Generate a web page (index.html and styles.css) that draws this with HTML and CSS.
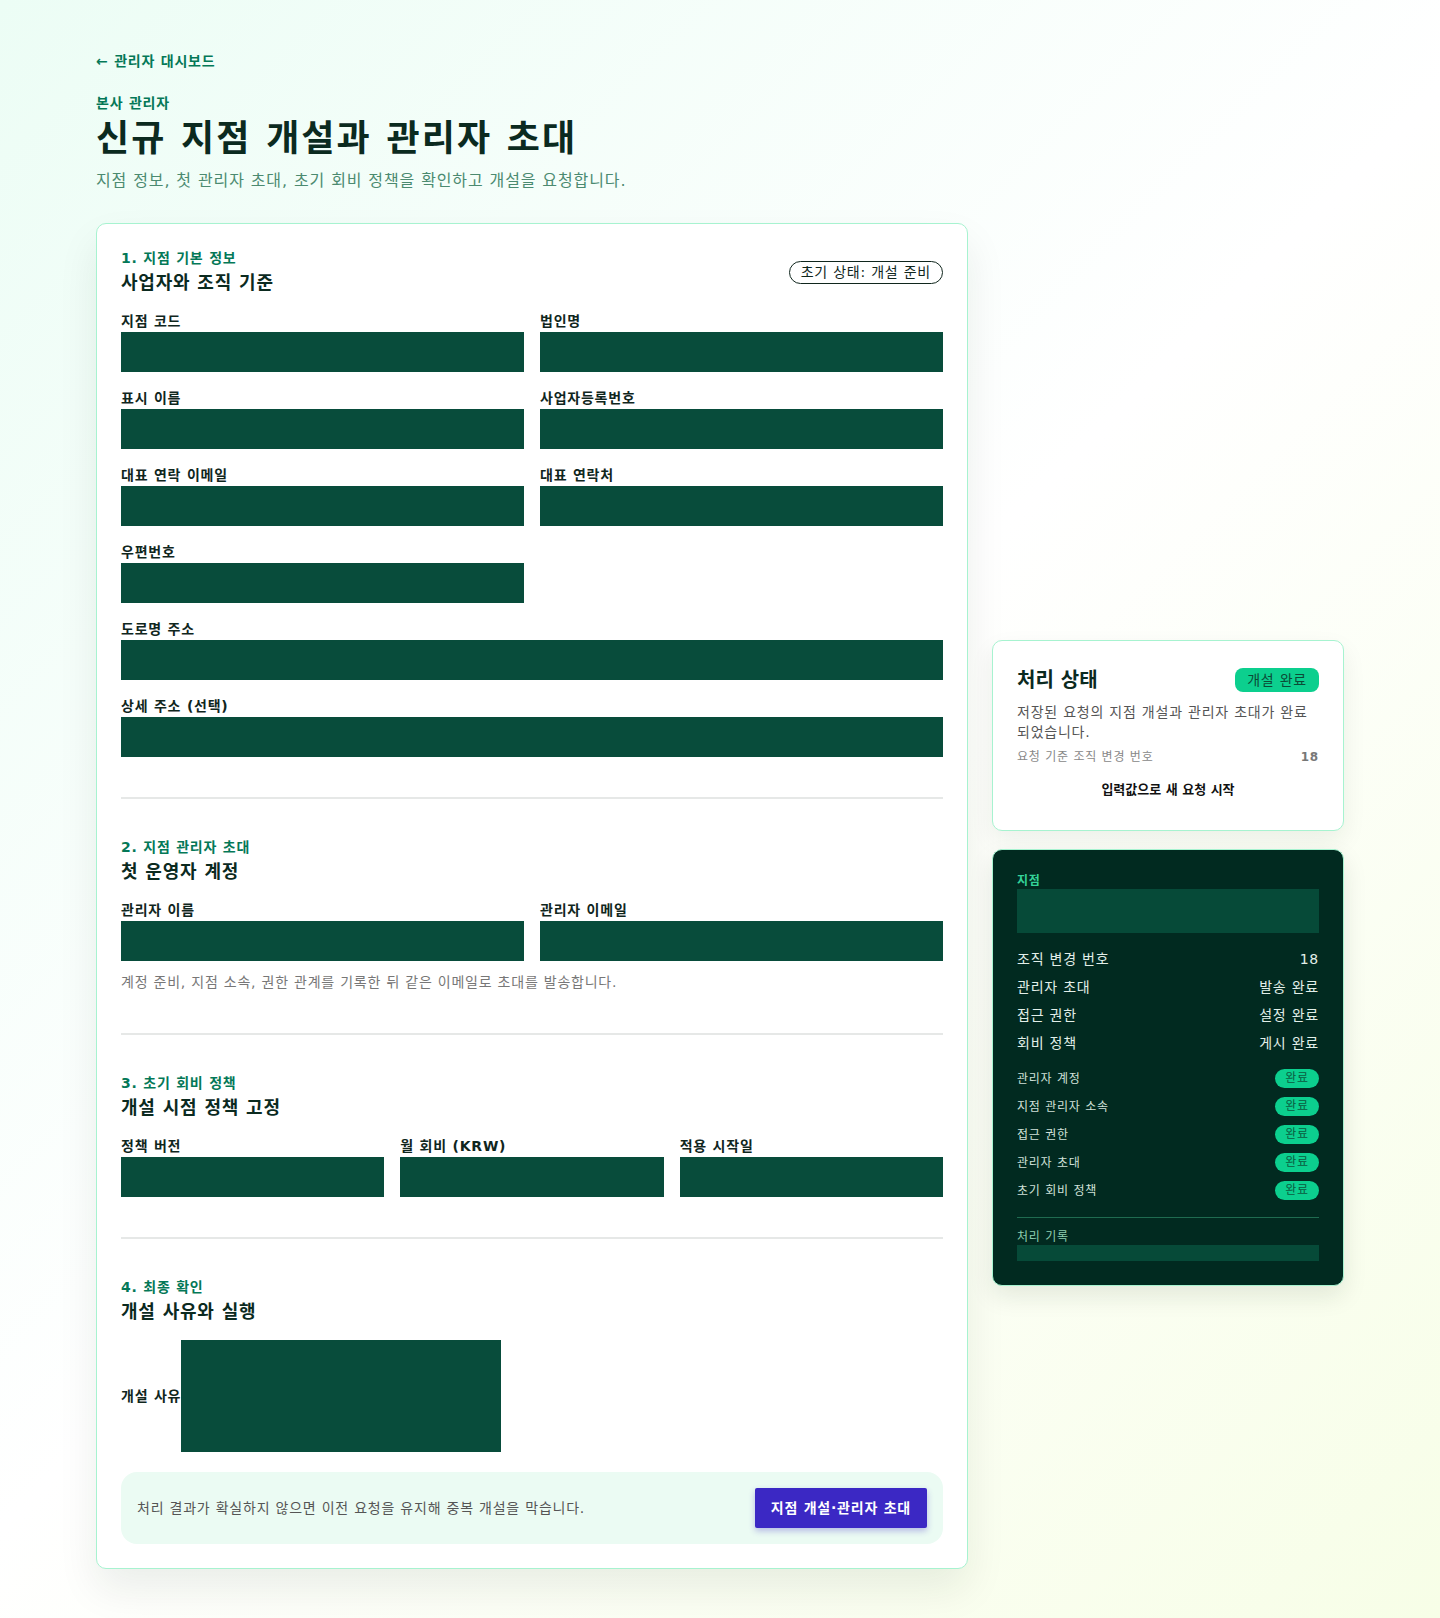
FILE: index.html
```html
<!DOCTYPE html>
<html lang="ko">
<head>
  <meta charset="UTF-8" />
  <meta name="viewport" content="width=device-width, initial-scale=1.0"/>
  <title>신규 지점 개설과 관리자 초대</title>
  <link rel="stylesheet" href="styles.css">
</head>
<body>

  <div class="page">
    <a class="back-link" href="#">← 관리자 대시보드</a>

    <header class="page-head">
      <p class="eyebrow">본사 관리자</p>
      <h1>신규 지점 개설과 관리자 초대</h1>
      <p class="lead">지점 정보, 첫 관리자 초대, 초기 회비 정책을 확인하고 개설을 요청합니다.</p>
    </header>

    <div class="layout">
      <form class="form-card">

        <!-- 1. 기본 정보 -->
        <section class="form-section">
          <div class="section-head">
            <div>
              <p class="step">1. 지점 기본 정보</p>
              <h2>사업자와 조직 기준</h2>
            </div>
            <span class="state-pill">초기 상태: 개설 준비</span>
          </div>
          <div class="fields">
            <label class="field">지점 코드<input type="text"></label>
            <label class="field">법인명<input type="text"></label>
            <label class="field">표시 이름<input type="text"></label>
            <label class="field">사업자등록번호<input type="text"></label>
            <label class="field">대표 연락 이메일<input type="email"></label>
            <label class="field">대표 연락처<input type="tel"></label>
            <label class="field">우편번호<input type="text"></label>
            <label class="field wide">도로명 주소<input type="text"></label>
            <label class="field wide">상세 주소 (선택)<input type="text"></label>
          </div>
        </section>

        <!-- 2. 관리자 초대 -->
        <section class="form-section">
          <p class="step">2. 지점 관리자 초대</p>
          <h2>첫 운영자 계정</h2>
          <div class="fields">
            <label class="field">관리자 이름<input type="text"></label>
            <label class="field">관리자 이메일<input type="email"></label>
          </div>
          <p class="hint">계정 준비, 지점 소속, 권한 관계를 기록한 뒤 같은 이메일로 초대를 발송합니다.</p>
        </section>

        <!-- 3. 회비 정책 -->
        <section class="form-section">
          <p class="step">3. 초기 회비 정책</p>
          <h2>개설 시점 정책 고정</h2>
          <div class="fields three">
            <label class="field">정책 버전<input type="text"></label>
            <label class="field">월 회비 (KRW)<input type="text"></label>
            <label class="field">적용 시작일<input type="text"></label>
          </div>
        </section>

        <!-- 4. 최종 확인 -->
        <section class="form-section">
          <p class="step">4. 최종 확인</p>
          <h2>개설 사유와 실행</h2>
          <label class="field inline">개설 사유<textarea></textarea></label>

          <div class="submit-bar">
            <p>처리 결과가 확실하지 않으면 이전 요청을 유지해 중복 개설을 막습니다.</p>
            <button type="button">지점 개설·관리자 초대</button>
          </div>
        </section>

      </form>

      <aside class="side">
        <div class="status-card">
          <div class="status-head">
            <h3>처리 상태</h3>
            <span class="done-pill">개설 완료</span>
          </div>
          <p class="status-text">저장된 요청의 지점 개설과 관리자 초대가 완료되었습니다.</p>
          <div class="status-meta">
            <span>요청 기준 조직 변경 번호</span>
            <strong>18</strong>
          </div>
          <button type="button" class="restart">입력값으로 새 요청 시작</button>
        </div>

        <div class="summary-card">
          <p class="summary-label">지점</p>
          <div class="summary-box"></div>

          <ul class="summary-rows">
            <li><span>조직 변경 번호</span><span>18</span></li>
            <li><span>관리자 초대</span><span>발송 완료</span></li>
            <li><span>접근 권한</span><span>설정 완료</span></li>
            <li><span>회비 정책</span><span>게시 완료</span></li>
          </ul>

          <ul class="checklist">
            <li><span>관리자 계정</span><em>완료</em></li>
            <li><span>지점 관리자 소속</span><em>완료</em></li>
            <li><span>접근 권한</span><em>완료</em></li>
            <li><span>관리자 초대</span><em>완료</em></li>
            <li><span>초기 회비 정책</span><em>완료</em></li>
          </ul>

          <div class="log">
            <p class="log-label">처리 기록</p>
            <div class="log-box"></div>
          </div>
        </div>
      </aside>
    </div>
  </div>

</body>
</html>
```

FILE: styles.css
```css
* {
  box-sizing: border-box;
}

body {
  margin: 0;
  font-family: "DejaVu Sans", "Noto Sans CJK KR", sans-serif;
  font-size: 14px;
  line-height: 1.5;
  letter-spacing: 0.77px;
  color: #10261d;
  background: linear-gradient(135deg, #ecfdf5 0%, #ffffff 50%, #f7fee7 100%);
  min-height: 100vh;
}

p, h1, h2, h3, ul {
  margin: 0;
  padding: 0;
}

button {
  letter-spacing: inherit;
}

.page {
  max-width: 1248px;
  margin: 0 auto;
  padding: 51px 0 48px;
}

.back-link {
  display: inline-block;
  font-weight: bold;
  color: #047857;
  text-decoration: none;
}

.page-head {
  margin-top: 21px;
  margin-bottom: 30px;
}

.eyebrow {
  font-weight: bold;
  color: #047857;
}

.page-head h1 {
  margin-top: 3px;
  font-size: 36px;
  line-height: 1.2;
  font-weight: bold;
  letter-spacing: 2.1px;
  color: #0b2a1f;
}

.lead {
  margin-top: 9px;
  font-size: 16px;
  letter-spacing: 0.89px;
  color: #4b8a70;
}

.layout {
  display: grid;
  grid-template-columns: minmax(0, 1fr) 352px;
  gap: 24px;
  align-items: start;
}

/* form card */

.form-card {
  background: #fff;
  border: 1px solid #a7f3d0;
  border-radius: 10px;
  padding: 24px;
  box-shadow: 0 20px 40px rgba(16, 38, 29, 0.08);
}

.form-section + .form-section {
  margin-top: 40px;
  padding-top: 38px;
  border-top: 2px solid #e6e8e7;
}

.section-head {
  display: flex;
  align-items: center;
  justify-content: space-between;
}

.step {
  font-weight: bold;
  color: #047857;
}

.form-section h2 {
  font-size: 18px;
  font-weight: bold;
  line-height: 1.5;
  color: #0b2a1f;
}

.state-pill {
  border: 1px solid #10261d;
  border-radius: 12px;
  padding: 0 11px;
  line-height: 21px;
  color: #10261d;
}

.fields {
  display: grid;
  grid-template-columns: 1fr 1fr;
  gap: 16px;
  margin-top: 15px;
}

.fields.three {
  grid-template-columns: 1fr 1fr 1fr;
}

.field {
  display: block;
  font-weight: bold;
  color: #10261d;
}

.field.wide {
  grid-column: 1 / -1;
}

.field input,
.field textarea {
  display: block;
  width: 100%;
  height: 40px;
  border: 0;
  border-radius: 0;
  background: #084c3b;
  font: inherit;
  color: #fff;
}

.field.inline {
  display: flex;
  align-items: center;
  margin-top: 15px;
}

.field.inline textarea {
  width: 320px;
  height: 112px;
  resize: none;
}

.hint {
  margin-top: 11px;
  color: #777;
}

.submit-bar {
  display: flex;
  align-items: center;
  justify-content: space-between;
  margin-top: 20px;
  padding: 16px;
  background: #ebfbf3;
  border-radius: 16px;
}

.submit-bar p {
  color: #555;
}

.submit-bar button {
  height: 40px;
  padding: 0 16px;
  border: 0;
  border-radius: 2px;
  background: #3b28c4;
  color: #fff;
  font: inherit;
  font-weight: bold;
  box-shadow: 0 3px 6px rgba(59, 40, 196, 0.3);
  cursor: pointer;
}

/* sidebar */

.side {
  margin-top: 417px;
  display: flex;
  flex-direction: column;
  gap: 18px;
}

.status-card {
  background: #fff;
  border: 1px solid #a7f3d0;
  border-radius: 10px;
  padding: 24px;
  box-shadow: 0 10px 24px rgba(16, 38, 29, 0.07);
}

.status-head {
  display: flex;
  align-items: center;
  justify-content: space-between;
}

.status-head h3 {
  font-size: 20px;
  font-weight: bold;
  letter-spacing: 0;
  color: #0b2a1f;
}

.done-pill {
  background: #0ccf8e;
  color: #0b4b36;
  border-radius: 8px;
  padding: 1px 12px;
  font-size: 14px;
  line-height: 22px;
}

.status-text {
  margin-top: 7px;
  color: #555;
  line-height: 20px;
}

.status-meta {
  display: flex;
  justify-content: space-between;
  margin-top: 6px;
  font-size: 12px;
  color: #888;
}

.status-meta strong {
  color: #777;
}

.restart {
  display: block;
  width: 100%;
  margin-top: 8px;
  padding: 6px;
  border: 0;
  background: none;
  font: inherit;
  font-size: 13px;
  font-weight: bold;
  letter-spacing: 0;
  color: #111;
  cursor: pointer;
}

.summary-card {
  background: #012a20;
  border: 1px solid #a7f3d0;
  border-radius: 10px;
  padding: 24px;
  color: #e2efe9;
  box-shadow: 0 10px 24px rgba(16, 38, 29, 0.1);
}

.summary-label {
  font-size: 12px;
  font-weight: bold;
  line-height: 15px;
  color: #34d399;
}

.summary-box {
  height: 44px;
  background: #064a38;
}

.summary-rows {
  list-style: none;
  margin-top: 16px;
}

.summary-rows li {
  display: flex;
  justify-content: space-between;
  line-height: 21px;
}

.summary-rows li + li {
  margin-top: 7px;
}

.checklist {
  list-style: none;
  margin-top: 15px;
}

.checklist li {
  display: flex;
  align-items: center;
  justify-content: space-between;
  height: 20px;
  font-size: 12px;
  color: #d0e0d8;
}

.checklist li + li {
  margin-top: 8px;
}

.checklist em {
  font-style: normal;
  width: 44px;
  text-align: center;
  line-height: 19px;
  border-radius: 10px;
  background: #0ccf8e;
  color: #0b5b40;
}

.log {
  margin-top: 16px;
  padding-top: 12px;
  border-top: 1px solid #1f6b50;
}

.log-label {
  font-size: 12px;
  line-height: 15px;
  color: #8fcfb0;
}

.log-box {
  height: 16px;
  background: #064a38;
}
```
